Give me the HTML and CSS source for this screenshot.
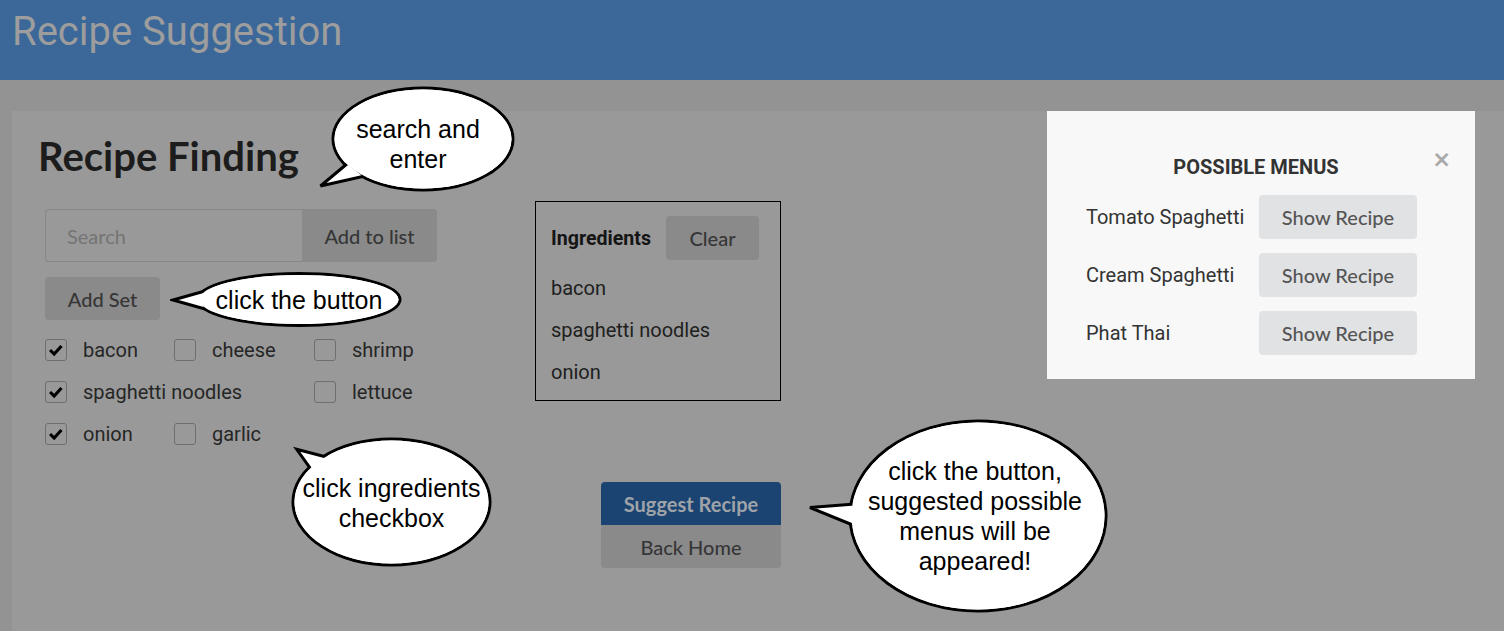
FILE: index.html
```html
<!DOCTYPE html>
<html lang="en">
<head>
<meta charset="utf-8">
<title>Recipe Suggestion</title>
<link rel="stylesheet" href="styles.css">
</head>
<body>
<header class="topbar"><h1>Recipe Suggestion</h1></header>
<main class="stage">
  <section class="panel">
    <h2 class="panel-title">Recipe Finding</h2>
    <div class="workspace">
      <div class="finder">
        <div class="search-group">
          <input class="search-input" type="text" placeholder="Search">
          <button class="btn btn-muted btn-addlist">Add to list</button>
        </div>
        <button class="btn btn-muted btn-addset">Add Set</button>
        <div class="checks">
          <label class="check"><span class="box"><svg viewBox="0 0 22 22"><path d="M4.5 11 L9 15.5 L17 6.5"/></svg></span>bacon</label>
          <label class="check"><span class="box"></span>cheese</label>
          <label class="check"><span class="box"></span>shrimp</label>
          <label class="check wide"><span class="box"><svg viewBox="0 0 22 22"><path d="M4.5 11 L9 15.5 L17 6.5"/></svg></span>spaghetti noodles</label>
          <label class="check"><span class="box"></span>lettuce</label>
          <label class="check"><span class="box"><svg viewBox="0 0 22 22"><path d="M4.5 11 L9 15.5 L17 6.5"/></svg></span>onion</label>
          <label class="check"><span class="box"></span>garlic</label>
        </div>
      </div>
      <div class="center">
        <div class="ingredients">
          <div class="ing-head">
            <span class="ing-title">Ingredients</span>
            <button class="btn btn-muted btn-clear">Clear</button>
          </div>
          <ul class="ing-list">
            <li>bacon</li>
            <li>spaghetti noodles</li>
            <li>onion</li>
          </ul>
        </div>
        <div class="actions">
          <button class="btn-suggest">Suggest Recipe</button>
          <button class="btn-back">Back Home</button>
        </div>
      </div>
    </div>
    <aside class="menus">
      <div class="menus-head">
        <span class="menus-title">POSSIBLE MENUS</span>
        <span class="menus-close">×</span>
      </div>
      <div class="menu-row"><span class="menu-name">Tomato Spaghetti</span><button class="btn-show">Show Recipe</button></div>
      <div class="menu-row"><span class="menu-name">Cream Spaghetti</span><button class="btn-show">Show Recipe</button></div>
      <div class="menu-row"><span class="menu-name">Phat Thai</span><button class="btn-show">Show Recipe</button></div>
    </aside>
  </section>
</main>

<div class="bubble bubble-search">
  <svg viewBox="0 0 200 106" width="200" height="106">
    <ellipse cx="107" cy="53" rx="90" ry="51" class="b-line"/>
    <polygon points="32,77 4.5,100 49,90" class="b-line"/>
    <ellipse cx="107" cy="53" rx="88.5" ry="49.5" class="b-fill"/>
  </svg>
  <p>search and<br>enter</p>
</div>

<div class="bubble bubble-set">
  <svg viewBox="0 0 234 60" width="234" height="60">
    <ellipse cx="129" cy="29.5" rx="101" ry="26" class="b-line"/>
    <polygon points="35,21 3,30 35,39" class="b-line"/>
    <ellipse cx="129" cy="29.5" rx="99.5" ry="24.5" class="b-fill"/>
  </svg>
  <p>click the button</p>
</div>

<div class="bubble bubble-check">
  <svg viewBox="0 0 204 132" width="204" height="132">
    <ellipse cx="101.5" cy="66" rx="98.5" ry="63" class="b-line"/>
    <polygon points="40,22 6.7,13.3 23,36" class="b-line"/>
    <ellipse cx="101.5" cy="66" rx="97" ry="61.5" class="b-fill"/>
  </svg>
  <p>click ingredients<br>checkbox</p>
</div>

<div class="bubble bubble-suggest">
  <svg viewBox="0 0 303 200" width="303" height="200">
    <ellipse cx="172" cy="98" rx="128" ry="95" class="b-line"/>
    <polygon points="49,86 4,89.5 54,110" class="b-line"/>
    <ellipse cx="172" cy="98" rx="126.5" ry="93.5" class="b-fill"/>
  </svg>
  <p>click the button,<br>suggested possible<br>menus will be<br>appeared!</p>
</div>
</body>
</html>
```

FILE: styles.css
```css
* { box-sizing: border-box; }

html, body {
  margin: 0;
  padding: 0;
}

body {
  width: 1504px;
  height: 631px;
  overflow: hidden;
  background: #939393;
  font-family: Roboto, "Liberation Sans", sans-serif;
  position: relative;
}

.topbar {
  height: 80px;
  background: #3c6899;
  padding: 8px 0 0 12px;
}

.topbar h1 {
  margin: 0;
  font-family: Roboto, sans-serif;
  font-weight: 400;
  font-size: 40px;
  color: #9d9d9d;
}

.stage {
  padding: 31px 0 0 12px;
}

.panel {
  position: relative;
  height: 520px;
  background: #999999;
  padding: 21px 0 0 26px;
}

.panel-title {
  margin: 0;
  font-family: Lato, sans-serif;
  font-weight: 700;
  font-size: 40px;
  line-height: 48px;
  color: #1c1c1c;
}

.workspace {
  display: flex;
  margin-top: 21px;
}

.finder {
  flex: none;
  width: 497px;
  padding: 8px 0 0 7px;
}

.btn {
  font-family: Lato, sans-serif;
  font-size: 20px;
  font-weight: 500;
  border: 0;
  border-radius: 4px;
  padding: 0;
}

.btn-muted {
  background: #8a8a8b;
  color: #363636;
}

.search-group {
  display: flex;
  height: 53px;
}

.search-input {
  width: 257px;
  height: 53px;
  border: 1px solid #878787;
  border-right: 0;
  border-radius: 4px 0 0 4px;
  background: #999999;
  padding: 0 0 0 21px;
  font-family: Lato, sans-serif;
  font-size: 20px;
  color: #333;
  outline: none;
}

.search-input::placeholder {
  color: #747474;
}

.btn-addlist {
  width: 135px;
  height: 53px;
  border-radius: 0 4px 4px 0;
}

.btn-addset {
  display: block;
  margin-top: 15px;
  width: 115px;
  height: 43px;
}

.checks {
  margin-top: 9px;
  display: grid;
  grid-template-columns: 129px 140px auto;
  grid-auto-rows: 42px;
  align-items: center;
}

.check {
  display: flex;
  align-items: center;
  gap: 16px;
  font-size: 20px;
  color: #262626;
}

.check.wide {
  grid-column: 1 / span 2;
}

.box {
  flex: none;
  width: 22px;
  height: 22px;
  border: 1px solid #6f6f6f;
  border-radius: 3px;
  display: flex;
}

.box svg {
  width: 20px;
  height: 20px;
}

.box path {
  fill: none;
  stroke: #000;
  stroke-width: 3.4;
  stroke-linecap: butt;
  stroke-linejoin: miter;
}

.center {
  flex: none;
  width: 246px;
  display: flex;
  flex-direction: column;
}

.ingredients {
  height: 200px;
  border: 1px solid #000;
  padding: 14px 0 0 15px;
}

.ing-head {
  display: flex;
  align-items: center;
  gap: 15px;
}

.ing-title {
  font-weight: 700;
  font-size: 19.6px;
  color: #151515;
}

.btn-clear {
  width: 93px;
  height: 44px;
}

.ing-list {
  list-style: none;
  margin: 7px 0 0;
  padding: 0;
}

.ing-list li {
  font-size: 20px;
  line-height: 42px;
  color: #202020;
}

.actions {
  align-self: flex-end;
  margin-top: 81px;
  width: 180px;
  display: flex;
  flex-direction: column;
  border-radius: 4px;
  overflow: hidden;
}

.btn-suggest,
.btn-back {
  border: 0;
  font-family: Lato, sans-serif;
  font-size: 20px;
  height: 43px;
  padding: 0;
}

.btn-suggest {
  background: #1b4472;
  color: #9fa3a8;
  font-weight: 700;
}

.btn-back {
  background: #8a8a8b;
  color: #363636;
  font-weight: 500;
}

.menus {
  position: absolute;
  top: 0;
  right: 29px;
  width: 428px;
  height: 268px;
  background: #f8f8f8;
  padding: 44px 31px 0 39px;
}

.menus-head {
  display: flex;
  align-items: flex-start;
  gap: 9px;
  height: 24px;
}

.menus-title {
  flex: 1;
  text-align: center;
  font-weight: 700;
  font-size: 20px;
  line-height: 24px;
  color: #333;
}

.menus-close {
  width: 12px;
  font-family: "DejaVu Sans", sans-serif;
  font-weight: 700;
  font-size: 23px;
  line-height: 14px;
  color: #a9a9a9;
  margin: -3px 0 0 -3px;
}

.menu-row {
  display: flex;
  align-items: center;
  margin-top: 14px;
}

.menus-head + .menu-row {
  margin-top: 16px;
}

.menu-name {
  width: 173px;
  font-size: 20px;
  color: #333;
}

.btn-show {
  width: 158px;
  height: 44px;
  border: 0;
  border-radius: 4px;
  background: #e1e2e4;
  color: #555;
  font-family: Lato, sans-serif;
  font-size: 20px;
  font-weight: 500;
}

/* speech bubbles (annotation overlays) */
.bubble {
  position: absolute;
}

.bubble svg {
  position: absolute;
  left: 0;
  top: 0;
}

.b-line {
  fill: #fff;
  stroke: #000;
  stroke-width: 3;
  stroke-linejoin: miter;
}

.b-fill {
  fill: #fff;
}

.bubble p {
  position: absolute;
  margin: 0;
  font-family: "Liberation Sans", Arial, sans-serif;
  font-size: 25px;
  line-height: 30px;
  color: #000;
  text-align: center;
  white-space: nowrap;
}

.bubble-search { left: 316px; top: 86px; width: 200px; height: 106px; }
.bubble-search p { left: 2px; width: 200px; top: 28px; }

.bubble-set { left: 170px; top: 270px; width: 234px; height: 60px; }
.bubble-set p { left: 29px; width: 200px; top: 15px; }

.bubble-check { left: 290px; top: 436px; width: 204px; height: 132px; }
.bubble-check p { left: 0; width: 203px; top: 37px; }

.bubble-suggest { left: 806px; top: 418px; width: 303px; height: 200px; }
.bubble-suggest p { left: 39px; width: 260px; top: 38px; }
```
